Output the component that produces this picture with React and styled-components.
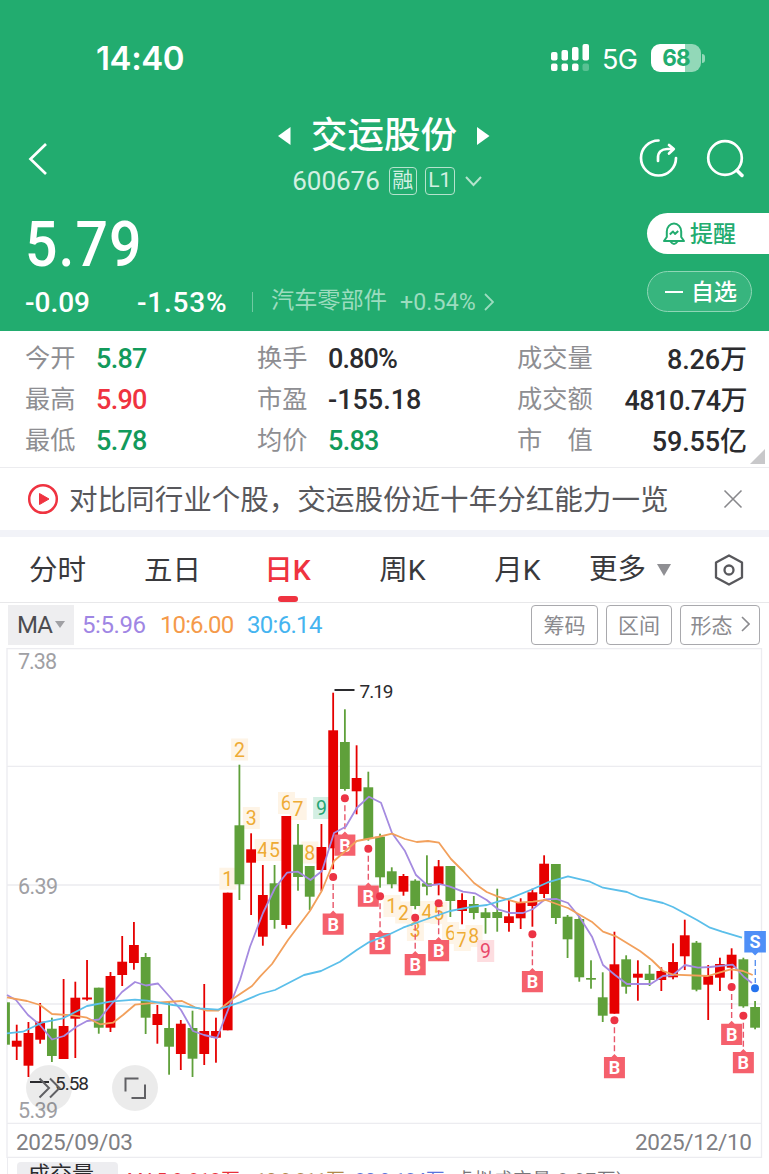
import styled, { createGlobalStyle } from 'styled-components'

const GlobalStyle = createGlobalStyle`
  * { box-sizing: border-box; }
  body {
    margin: 0;
    width: 769px;
    height: 1174px;
    overflow: hidden;
    background: #fff;
    font-family: Roboto, 'Noto Sans CJK SC', sans-serif;
    color: #2b2b2e;
    white-space: nowrap;
  }
`

const Screen = styled.div`
  width: 769px;
  height: 1174px;
  overflow: hidden;
  display: flex;
  flex-direction: column;
`

const Header = styled.header`
  height: 331px;
  flex: none;
  background: #22ac6f;
  color: #fff;
`

const StatusBar = styled.div`
  height: 116px;
  display: flex;
  align-items: center;
  padding: 0 64px 0 96px;
  font-family: Inter, sans-serif;
`

const Clock = styled.div`
  flex: 1;
  font-size: 33px;
  font-weight: 600;
  letter-spacing: -0.4px;
`

const Network = styled.span`
  font-size: 27px;
  width: 36px;
  margin: 2px 13px 0 12px;
  letter-spacing: -0.6px;
`

const Battery = styled.div`
  width: 50px;
  height: 28px;
  border-radius: 9px;
  background: linear-gradient(90deg, #fff 68%, #92d8b8 68%);
  color: #22ac6f;
  font-size: 22.5px;
  font-weight: 700;
  letter-spacing: -0.8px;
  line-height: 28px;
  text-align: center;
`

const BatteryCap = styled.i`
  width: 3px;
  height: 9px;
  margin-left: 1px;
  border-radius: 0 4px 4px 0;
  background: #92d8b8;
`

const TitleBar = styled.div`
  height: 88px;
  display: grid;
  grid-template-columns: 236px 296px 1fr;
`

const BackIcon = styled.svg`
  margin: 26px 0 0 27px;
`

const StockTitle = styled.div`
  display: flex;
  flex-direction: column;
  align-items: center;
`

const NameRow = styled.div`
  display: flex;
  align-items: center;
  height: 39px;
  gap: 20px;
  font-size: 36.5px;
  font-weight: 500;
  line-height: 39px;
`

const CodeRow = styled.div`
  display: flex;
  align-items: center;
  height: 30px;
  margin: 11px 0 0 6px;
  font-size: 26px;
  color: #d3f0e2;
`

const Tag = styled.span`
  width: ${p => p.$w}px;
  height: 28px;
  margin-left: ${p => p.$gap}px;
  border: 1.5px solid #b5e3cd;
  border-radius: 4px;
  font-size: 21px;
  line-height: 25px;
  text-align: center;
`

const Actions = styled.div`
  display: flex;
  padding: 22px 0 0 106px;
  gap: 26px;
`

const PriceRow = styled.div`
  display: flex;
  height: 127px;
  justify-content: space-between;
`

const Price = styled.div`
  margin-left: 25px;
  height: 82px;
  line-height: 82px;
  font-size: 63.5px;
  font-weight: 500;
  letter-spacing: 1.2px;
  transform: scaleX(0.9);
  transform-origin: left;
`

const ChangeRow = styled.div`
  display: flex;
  align-items: center;
  height: 32px;
  padding-left: 25px;
  font-size: 28px;
  font-weight: 500;
`

const Change = styled.span`
  width: ${p => p.$w}px;
  letter-spacing: ${p => p.$ls}px;
`

const Sector = styled.span`
  display: flex;
  align-items: center;
  height: 20px;
  padding-left: 18px;
  border-left: 1.5px solid #6fcaa2;
  font-size: 23.2px;
  line-height: 30px;
  font-weight: 400;
  color: #9cdcbf;

  b {
    font-weight: 400;
    margin: 0 8px 0 13px;
    letter-spacing: 0.1px;
  }
`

const SectorName = styled.span`
  margin-top: -4px;
`

const Pills = styled.div`
  width: 122px;
  padding-top: 9px;
`

const Pill = styled.div`
  display: flex;
  align-items: center;
  height: 41px;
  width: ${p => (p.$solid ? 122 : 105)}px;
  margin-bottom: 17px;
  padding: 0 0 3px 16px;
  border: ${p => (p.$solid ? 'none' : '1.5px solid #8fd6b6')};
  border-radius: ${p => (p.$solid ? '21px 0 0 21px' : '21px')};
  background: ${p => (p.$solid ? '#fff' : '#37b57e')};
  color: ${p => (p.$solid ? '#22ac6f' : '#fff')};
  font-size: 23px;
  font-weight: 500;

  svg { margin-top: 3px; }
`

const Stats = styled.section`
  position: relative;
  flex: none;
  height: 137px;
  padding: 7px 22px 0 25px;
  border-bottom: 1.5px solid #ececef;
  display: grid;
  grid-template-columns: 232px 260px 1fr;
  grid-auto-rows: 41px;
`

const Stat = styled.div`
  display: flex;
  align-items: center;
  justify-content: ${p => (p.$spread ? 'space-between' : 'flex-start')};
  padding-bottom: ${p => (p.$spread ? 2 : 0)}px;
  color: ${p => p.$color || '#2b2b2e'};
  font-size: 27px;
  font-weight: 500;
  letter-spacing: ${p => p.$ls}px;
`

const StatLabel = styled.span`
  width: ${p => (p.$spread ? 80 : 71)}px;
  margin-top: ${p => (p.$spread ? -4 : -6)}px;
  font-size: 25.2px;
  font-weight: 400;
  letter-spacing: 0;
  color: #8e8e92;
`

const Corner = styled.i`
  position: absolute;
  right: 4px;
  bottom: 3px;
  border-style: solid;
  border-width: 0 0 15px 15px;
  border-color: transparent transparent #c8c8ca transparent;
`

const News = styled.section`
  flex: none;
  display: flex;
  align-items: center;
  height: 69px;
  padding: 0 26px 0 27px;
  border-bottom: 7px solid #f2f3f8;
  font-size: 28.55px;
  color: #58585c;

  span { flex: 1; margin: -3px 0 0 10px; }
`

const Tabs = styled.nav`
  flex: none;
  display: flex;
  height: 66px;
  border-bottom: 1.5px solid #e8e8ea;
  font-size: 28.5px;
  line-height: 68px;
  color: #39393c;
`

const Tab = styled.div`
  width: 115px;
  display: flex;
  flex-direction: column;
  align-items: center;
  color: ${p => (p.$active ? '#ef3340' : 'inherit')};
  font-weight: ${p => (p.$active ? 500 : 400)};

  &::after {
    content: '';
    display: ${p => (p.$active ? 'block' : 'none')};
    width: 20px;
    height: 6px;
    margin-top: -9px;
    border-radius: 3px;
    background: #ef3340;
  }
`

const MoreTab = styled.div`
  display: flex;
  align-items: center;
  margin-left: 14px;
  gap: 11px;
`

const Indicators = styled.div`
  flex: none;
  display: flex;
  align-items: center;
  height: 45px;
  padding: 0 9px 2px 8px;
  font-size: 24px;
`

const MaSelect = styled.div`
  display: flex;
  align-items: center;
  gap: 3px;
  width: 66px;
  height: 40px;
  padding-left: 9px;
  margin-right: 8px;
  background: #eeeef0;
  color: #4c4c50;
  letter-spacing: -1px;
`

const MaValue = styled.span`
  width: ${p => p.$w}px;
  color: ${p => p.$color};
  letter-spacing: ${p => p.$ls}px;
`

const ToolButton = styled.div`
  display: flex;
  align-items: center;
  justify-content: center;
  gap: 8px;
  width: ${p => p.$w}px;
  height: 40px;
  padding-bottom: 2px;
  margin-left: 8px;
  border: 1.5px solid #a9a9ad;
  border-radius: 4px;
  font-size: 21px;
  color: #8b8b8f;
`

const Chart = styled.svg`
  flex: none;
  display: block;
`

const Volume = styled.div`
  flex: none;
  display: flex;
  height: 30px;
  margin-left: 7px;
  padding: 4px 0 0 9px;
  border-left: 1px solid #ececf0;
  font-size: 18.5px;
  line-height: 34px;
`

const VolumeTab = styled.div`
  width: 101px;
  padding-left: 11px;
  margin-right: 9px;
  border-radius: 4px 4px 0 0;
  background: #ededf0;
  font-size: 22px;
  line-height: 26px;
`

const VolumeValue = styled(MaValue)`
  padding-top: 1px;
`

// label, value, colour, letter spacing
const STATS = [
  ['今开', '5.87', '#129a5b', -0.7],
  ['换手', '0.80%', undefined, -0.9],
  ['成交量', '8.26万', undefined, -0.1],
  ['最高', '5.90', '#ef3340', -0.7],
  ['市盈', '-155.18', undefined, 0],
  ['成交额', '4810.74万', undefined, -0.5],
  ['最低', '5.78', '#129a5b', -0.7],
  ['均价', '5.83', '#129a5b', -0.7],
  ['市\u3000值', '59.55亿', undefined, -0.1],
]

const RED = '#e60000'
const GREEN = '#5fa03a'

// [up, high, body top, body bottom, low], one entry per trading day
const CANDLES = [
  [0, 1002.3, 1002.3, 1044.7, 1044.7], [1, 1024.7, 1040.7, 1046.7, 1060], [1, 1022, 1033, 1065.7, 1077],
  [1, 1003, 1021.7, 1039.7, 1043.7], [0, 1017.7, 1028.7, 1056, 1062], [1, 979, 1026, 1059, 1059],
  [1, 981.7, 997.7, 1018.7, 1058], [1, 960, 997.5, 999.5, 1000.7], [0, 987.7, 987.7, 1027.7, 1033.7],
  [1, 972, 976, 1027.7, 1032], [1, 936, 961.7, 975, 986], [1, 922, 945, 963, 969.7],
  [0, 953, 957, 1017.7, 1034], [1, 1005, 1014, 1025, 1043.7], [0, 1002, 1028, 1046.7, 1074.7],
  [1, 1020, 1023.7, 1054, 1070], [0, 1010.7, 1028, 1058.7, 1077], [1, 984, 1031, 1054, 1065],
  [1, 1017.7, 1031, 1037.7, 1062.7], [1, 892.7, 892.7, 1030.3, 1030.3], [0, 764.7, 825.3, 884.3, 900],
  [1, 833.3, 849.3, 862.7, 915], [1, 865, 895, 936.7, 945.7], [0, 865, 883.3, 920, 928.7],
  [1, 816, 816, 925, 928.7], [0, 824, 844.7, 877, 890.7], [0, 866, 866, 896.7, 910],
  [1, 824, 847, 870, 891], [1, 692.7, 730.3, 848.3, 869.3], [0, 709.3, 742, 789, 790.7],
  [1, 745.3, 778, 791.3, 814.3], [0, 771.7, 787.3, 839, 840.7], [0, 833.7, 836.7, 877.3, 887.7],
  [0, 867.3, 871.3, 884.3, 888.3], [1, 874, 876, 891.7, 895.7], [0, 879.3, 880.7, 906, 909.3],
  [0, 855.3, 883.3, 886.7, 895.3], [1, 860, 866.3, 884, 895.3], [0, 866, 866, 901, 917],
  [1, 893.3, 900, 911, 924.3], [0, 896, 904, 913, 919.3], [0, 908, 912.3, 918, 933.7],
  [0, 888.7, 912, 918, 931.7], [1, 900, 916.3, 923, 931.7], [1, 898.3, 903, 918.3, 929],
  [1, 888.7, 892.3, 906, 926.7], [1, 855.3, 863.7, 894, 898], [0, 864, 864, 918, 924],
  [0, 915, 916.7, 939.3, 958], [0, 916, 919, 977.3, 981.7], [0, 960.3, 978, 979.7, 988.7],
  [0, 972.3, 997.3, 1015.7, 1022], [1, 931.7, 964.3, 1013.7, 1013.7], [0, 955.3, 959.3, 986.7, 993.7],
  [1, 960.3, 973.7, 977.7, 1000.7], [0, 965, 973.7, 980, 986], [1, 967.3, 971, 980, 991],
  [1, 943.3, 962, 977.3, 979.3], [1, 919.7, 935.3, 956.3, 970], [0, 941, 942.7, 989.7, 991.3],
  [1, 965, 975.7, 984.7, 1020], [1, 957.7, 964, 977.7, 991], [1, 948.3, 954.7, 967.7, 979.3],
  [0, 957.7, 959.3, 1006.3, 1007.7], [0, 1001, 1007, 1027.7, 1029.3],
]

const MA5 = '7,995 16,1000 28,1015 40,1025 52,1039.5 64,1036 76,1027 87,1021 99,1019.5 110,1006 122,992 135,982 146,985.5 158,983.5 169,996 181,1010 193,1031 204,1035 217,1038 228,1010 240,980 250,946.7 263,913 275,888 287,872.7 298,871.7 310.5,880 322,871 334,833 345.7,826.7 356.7,808 369,796.7 381,802.7 392,833 405,851 416,875 427.7,885.7 440,884 450,886.7 463,891.7 475,893.3 486.7,900 498,909.3 510,913 523,913 533,909 545,899.3 556.7,899 568,903 580,917.7 592,936.7 603,965 615,975 627,984 650.7,984 663,976 673,975 685,965 698,967.7 710,967 732.7,964.7 744,977 752,983'
const MA10 = '7,997.3 27,1001 40,1005 52,1014 73,1015.3 87,1017.7 100,1024.3 113,1022.7 123,1015 135,1004.7 157,1002.7 182,1001 195,1007.3 207,1010.7 218,1010.7 233,998.7 252,986 260,976.7 272,964 282,949 288,940 310,910.7 321.7,891 334,861 356.7,841 378,837 392,833.7 405,839 416.7,842 428,841 439,842.7 451,859 463,871 474,883 486.7,892 498,896.7 518,902.7 533,901.7 545.7,900 556.7,904 568,908 591.7,921.7 603,931.7 616.7,936.7 640,951 651.7,960 663,971 673,974.7 708,976 720,972.3 730.7,969.3 743,971 752.7,975'
const MA30 = '7,1033.3 23,1031.7 43,1022.3 63,1018.3 87,1006 110,1001.7 135,999.7 147,1000.7 173,1005 200,1008.3 218,1009.7 240,1002.3 260,994 275,990 304,975 321,971 340,961.7 356.7,950 368,942.7 390,934 403,927.7 427,919 450,911 473,906.7 487,905 498,901.7 510,898.3 533,889 547,882.7 568,876.3 590,881.7 603,887.7 627,892 640,897.7 663,903 673,907 697,920 710,927.7 722,931.7 742,937.7'

// [day, dot y, box top]
const BUYS = [
  [28, 877, 913.5], [29, 798.3, 834.5], [31, 848.7, 885.5], [32, 896.3, 933], [35, 917.7, 954], [37, 903.3, 940],
  [45, 934.3, 971], [52, 1020.3, 1057], [62, 987, 1023.7], [63, 1015.7, 1052],
]

// [digit, day, center y]
const COUNTS = [
  [1, 19, 878.7], [2, 20, 749.5], [3, 21, 818], [4, 22, 850], [5, 23, 850], [6, 24, 803], [7, 25, 809],
  [8, 26, 852.5], [9, 27, 808, '#d3efe3', '#27a574'],
  [1, 33, 906], [2, 34, 912.5], [3, 35, 930], [4, 36, 912], [5, 37, 913], [6, 38, 933], [7, 39, 940],
  [8, 40, 936], [9, 41, 951, '#fddde0', '#e8476a'],
]

const dayX = i => 5 + i * 11.72

function Candles() {
  return CANDLES.map(([up, high, top, bottom, low], i) => {
    const x = dayX(i)
    const left = Math.max(x - 4.9, 7)
    return (
      <g key={i} fill={up ? RED : GREEN}>
        {i > 0 && <rect x={x - 0.9} y={high} width="1.8" height={low - high} />}
        <rect x={left} y={top} width={x + 4.9 - left} height={bottom - top} />
      </g>
    )
  })
}

function Buy({ x, dot, top }) {
  return (
    <g>
      <path d={`M${x} ${dot + 7}V${top - 3}`} stroke="#e8566a" strokeWidth="1.4" strokeDasharray="6 3" />
      <circle cx={x} cy={dot} r="4" fill="#ec3344" />
      <path d={`M${x - 10.5} ${top}h7.5l3-3 3 3h7.5v21.3h-21z`} fill="#f5606c" />
      <text x={x} y={top + 17} fontSize="18" fontWeight="700" fill="#fff" textAnchor="middle">B</text>
    </g>
  )
}

function KLine() {
  return (
    <Chart width="769" height="510" viewBox="0 648 769 510">
      <g stroke="#ececf0" strokeWidth="1.3" fill="none">
        <path d="M7 648.7H761M7 766.3H761M7 885H761M7 1004H761M7 1123.3H761M7 1157.3H761M7 648V1158M761.5 648V1158" />
      </g>
      <g fontSize="21.5" fill="#a0a0a4">
        <text x="18" y="669" textLength="39">7.38</text>
        <text x="18" y="893.5" textLength="40">6.39</text>
        <text x="18" y="1118" textLength="40">5.39</text>
      </g>
      {COUNTS.map(([n, day, y, bg = '#fef4e6', fg = '#eeab35']) => (
        <g key={day}>
          <rect x={dayX(day) - 8.3} y={y - 11} width="17" height="22" fill={bg} />
          <text x={dayX(day)} y={y + 7} fontSize="19.5" fill={fg} textAnchor="middle">{n}</text>
        </g>
      ))}
      <Candles />
      {BUYS.map(([day, dot, top]) => <Buy key={day} x={dayX(day)} dot={dot} top={top} />)}
      <g fill="none" strokeWidth="1.8" strokeLinejoin="round">
        <polyline points={MA5} stroke="#a58be0" />
        <polyline points={MA10} stroke="#f2a05c" />
        <polyline points={MA30} stroke="#5bbfea" />
      </g>
      <path d="M755.3 960V983" stroke="#5a93f0" strokeWidth="1.4" strokeDasharray="6 3" />
      <circle cx="755" cy="988.3" r="4" fill="#2673ee" />
      <path d="M744.3 931h21.6v21.4h-7.8l-3 3-3-3h-7.8z" fill="#4f8ff7" />
      <text x="755" y="948" fontSize="18" fontWeight="700" fill="#fff" textAnchor="middle">S</text>
      <path d="M334.5 690H354.5" stroke="#2b2b2e" strokeWidth="2" />
      <text x="359.5" y="697.5" fontSize="19" fill="#2b2b2e" textLength="34">7.19</text>
      <g fill="#000" fillOpacity="0.08">
        <circle cx="49" cy="1088" r="23" />
        <circle cx="135" cy="1088" r="23" />
      </g>
      <path d="M30 1082H49" stroke="#2b2b2e" strokeWidth="2" />
      <text x="55" y="1090" fontSize="19" fill="#2b2b2e" textLength="34">5.58</text>
      <g fill="none" stroke="#606064" strokeWidth="2">
        <path d="M39.5 1078.5L49 1088l-9.5 9.5M50 1078.5L59.5 1088l-9.5 9.5" />
        <path d="M125.5 1091.5V1078.5H138.5M145 1084.5V1098H131.5" />
      </g>
      <g fontSize="22.5" fill="#808084">
        <text x="16" y="1149.5" textLength="117">2025/09/03</text>
        <text x="635" y="1149.5" textLength="117">2025/12/10</text>
      </g>
    </Chart>
  )
}

function App() {
  return (
    <Screen>
      <GlobalStyle />
      <Header>
        <StatusBar>
          <Clock>14:40</Clock>
          <svg width="39" height="28" fill="#fff">
            <rect x="0" y="8" width="6.5" height="8.5" rx="2" />
            <rect x="10.5" y="6" width="6.5" height="10.5" rx="2" />
            <rect x="21" y="3" width="6.5" height="13.5" rx="2" />
            <rect x="31.5" y="0" width="6.5" height="16.5" rx="2" />
            <rect x="0" y="19.5" width="6.5" height="7.5" rx="2" />
            <rect x="10.5" y="19.5" width="6.5" height="7.5" rx="2" />
            <rect x="21" y="19.5" width="6.5" height="7.5" rx="2" />
            <rect x="31.5" y="19.5" width="6.5" height="7.5" rx="2" opacity="0.25" />
          </svg>
          <Network>5G</Network>
          <Battery>68</Battery>
          <BatteryCap />
        </StatusBar>
        <TitleBar>
          <BackIcon width="22" height="34" fill="none" stroke="#fff" strokeWidth="2.7">
            <path d="M19 2L3.5 17L19 32" />
          </BackIcon>
          <StockTitle>
            <NameRow>
              <svg width="13" height="18" fill="#fff"><path d="M12.5 0V18L0 9z" /></svg>
              交运股份
              <svg width="13" height="18" fill="#fff"><path d="M0 0V18L12.5 9z" /></svg>
            </NameRow>
            <CodeRow>
              600676
              <Tag $w={28} $gap={9}>融</Tag>
              <Tag $w={30} $gap={8}>L1</Tag>
              <svg width="27" height="12" fill="none" stroke="#b5e3cd" strokeWidth="2"><path d="M11 2L18.5 10L26 2" /></svg>
            </CodeRow>
          </StockTitle>
          <Actions>
            <svg width="42" height="42" viewBox="0 0 42 42" fill="none" stroke="#fff" strokeWidth="2.7" strokeLinecap="round" strokeLinejoin="round">
              <path d="M20.5 2.5A17.5 17.5 0 1 0 38 20" />
              <path d="M20 23V20C20 14 24 11 29 11H35.5M31 7L35.8 11L31 15.5" />
            </svg>
            <svg width="42" height="42" viewBox="0 0 42 42" fill="none" stroke="#fff" strokeWidth="2.7" strokeLinecap="round">
              <circle cx="19" cy="20" r="16.8" />
              <path d="M31 32.5L36 37.5" strokeWidth="3.5" />
            </svg>
          </Actions>
        </TitleBar>
        <PriceRow>
          <div>
            <Price>5.79</Price>
            <ChangeRow>
              <Change $w={112} $ls={0}>-0.09</Change>
              <Change $w={115} $ls={0.8}>-1.53%</Change>
              <Sector>
                <SectorName>汽车零部件</SectorName>
                <b>+0.54%</b>
                <svg width="10" height="18" fill="none" stroke="currentColor" strokeWidth="1.8"><path d="M1 1L9 9L1 17" /></svg>
              </Sector>
            </ChangeRow>
          </div>
          <Pills>
            <Pill $solid>
              <svg width="27" height="24" viewBox="0 0 27 24" fill="none" stroke="currentColor" strokeWidth="2" strokeLinejoin="round">
                <path d="M3.8 15V9.5A7.2 8 0 0 1 18.2 9.5V15L21 19H1zM7.5 19.5Q11 24.5 14.5 19.5" />
                <path d="M6.8 12.5L10 9.5L12 12L15.2 9" />
              </svg>
              提醒
            </Pill>
            <Pill>
              <svg width="27" height="4" stroke="#fff" strokeWidth="2"><path d="M1 2H19" /></svg>
              自选
            </Pill>
          </Pills>
        </PriceRow>
      </Header>

      <Stats>
        {STATS.map(([label, value, color, ls], i) => (
          <Stat key={label} $color={color} $ls={ls} $spread={i % 3 === 2}>
            <StatLabel $spread={i % 3 === 2}>{label}</StatLabel>
            {value}
          </Stat>
        ))}
        <Corner />
      </Stats>

      <News>
        <svg width="32" height="32" fill="none">
          <circle cx="16" cy="16" r="13.8" stroke="#ef3340" strokeWidth="2.5" />
          <path d="M12.5 10.5V21.5L22 16z" fill="#ef3340" stroke="#ef3340" strokeLinejoin="round" />
        </svg>
        <span>对比同行业个股，交运股份近十年分红能力一览</span>
        <svg width="20" height="20" stroke="#88888c" strokeWidth="1.6"><path d="M1.5 1.5L18.5 18.5M18.5 1.5L1.5 18.5" /></svg>
      </News>

      <Tabs>
        <Tab>分时</Tab>
        <Tab>五日</Tab>
        <Tab $active>日K</Tab>
        <Tab>周K</Tab>
        <Tab>月K</Tab>
        <MoreTab>
          更多
          <svg width="14" height="12" fill="#8f8f93"><path d="M0 0H14L7 12z" /></svg>
          <svg width="76" height="34" fill="none" stroke="#58585c" strokeWidth="2.3" strokeLinejoin="round">
            <path d="M47 2.5L60 9.5V24.5L47 31.5L34 24.5V9.5z" />
            <circle cx="47" cy="17" r="4.5" />
          </svg>
        </MoreTab>
      </Tabs>

      <Indicators>
        <MaSelect>
          MA
          <svg width="10" height="7" fill="#a0a0a4"><path d="M0 0H10L5 7z" /></svg>
        </MaSelect>
        <MaValue $w={78} $color="#9f86e4" $ls={-0.4}>5:5.96</MaValue>
        <MaValue $w={87} $color="#f59a4a" $ls={-0.9}>10:6.00</MaValue>
        <MaValue $w={276} $color="#45b4f0" $ls={-0.7}>30:6.14</MaValue>
        <ToolButton $w={67}>筹码</ToolButton>
        <ToolButton $w={66}>区间</ToolButton>
        <ToolButton $w={80}>
          形态
          <svg width="9" height="16" fill="none" stroke="currentColor" strokeWidth="1.6"><path d="M1 1L8 8L1 15" /></svg>
        </ToolButton>
      </Indicators>

      <KLine />

      <Volume>
        <VolumeTab>成交量</VolumeTab>
        <VolumeValue $w={129} $color="#e8303a" $ls={0.5}>MA5:8.812万</VolumeValue>
        <VolumeValue $w={99} $color="#b08a4a" $ls={-0.2}>10:9.211万</VolumeValue>
        <VolumeValue $w={100} $color="#5a74dc" $ls={-0.1}>30:9.124万</VolumeValue>
        <VolumeValue $w={180} $color="#77777b" $ls={0.9}>虚拟成交量:8.97万)</VolumeValue>
      </Volume>
    </Screen>
  )
}

export default App
